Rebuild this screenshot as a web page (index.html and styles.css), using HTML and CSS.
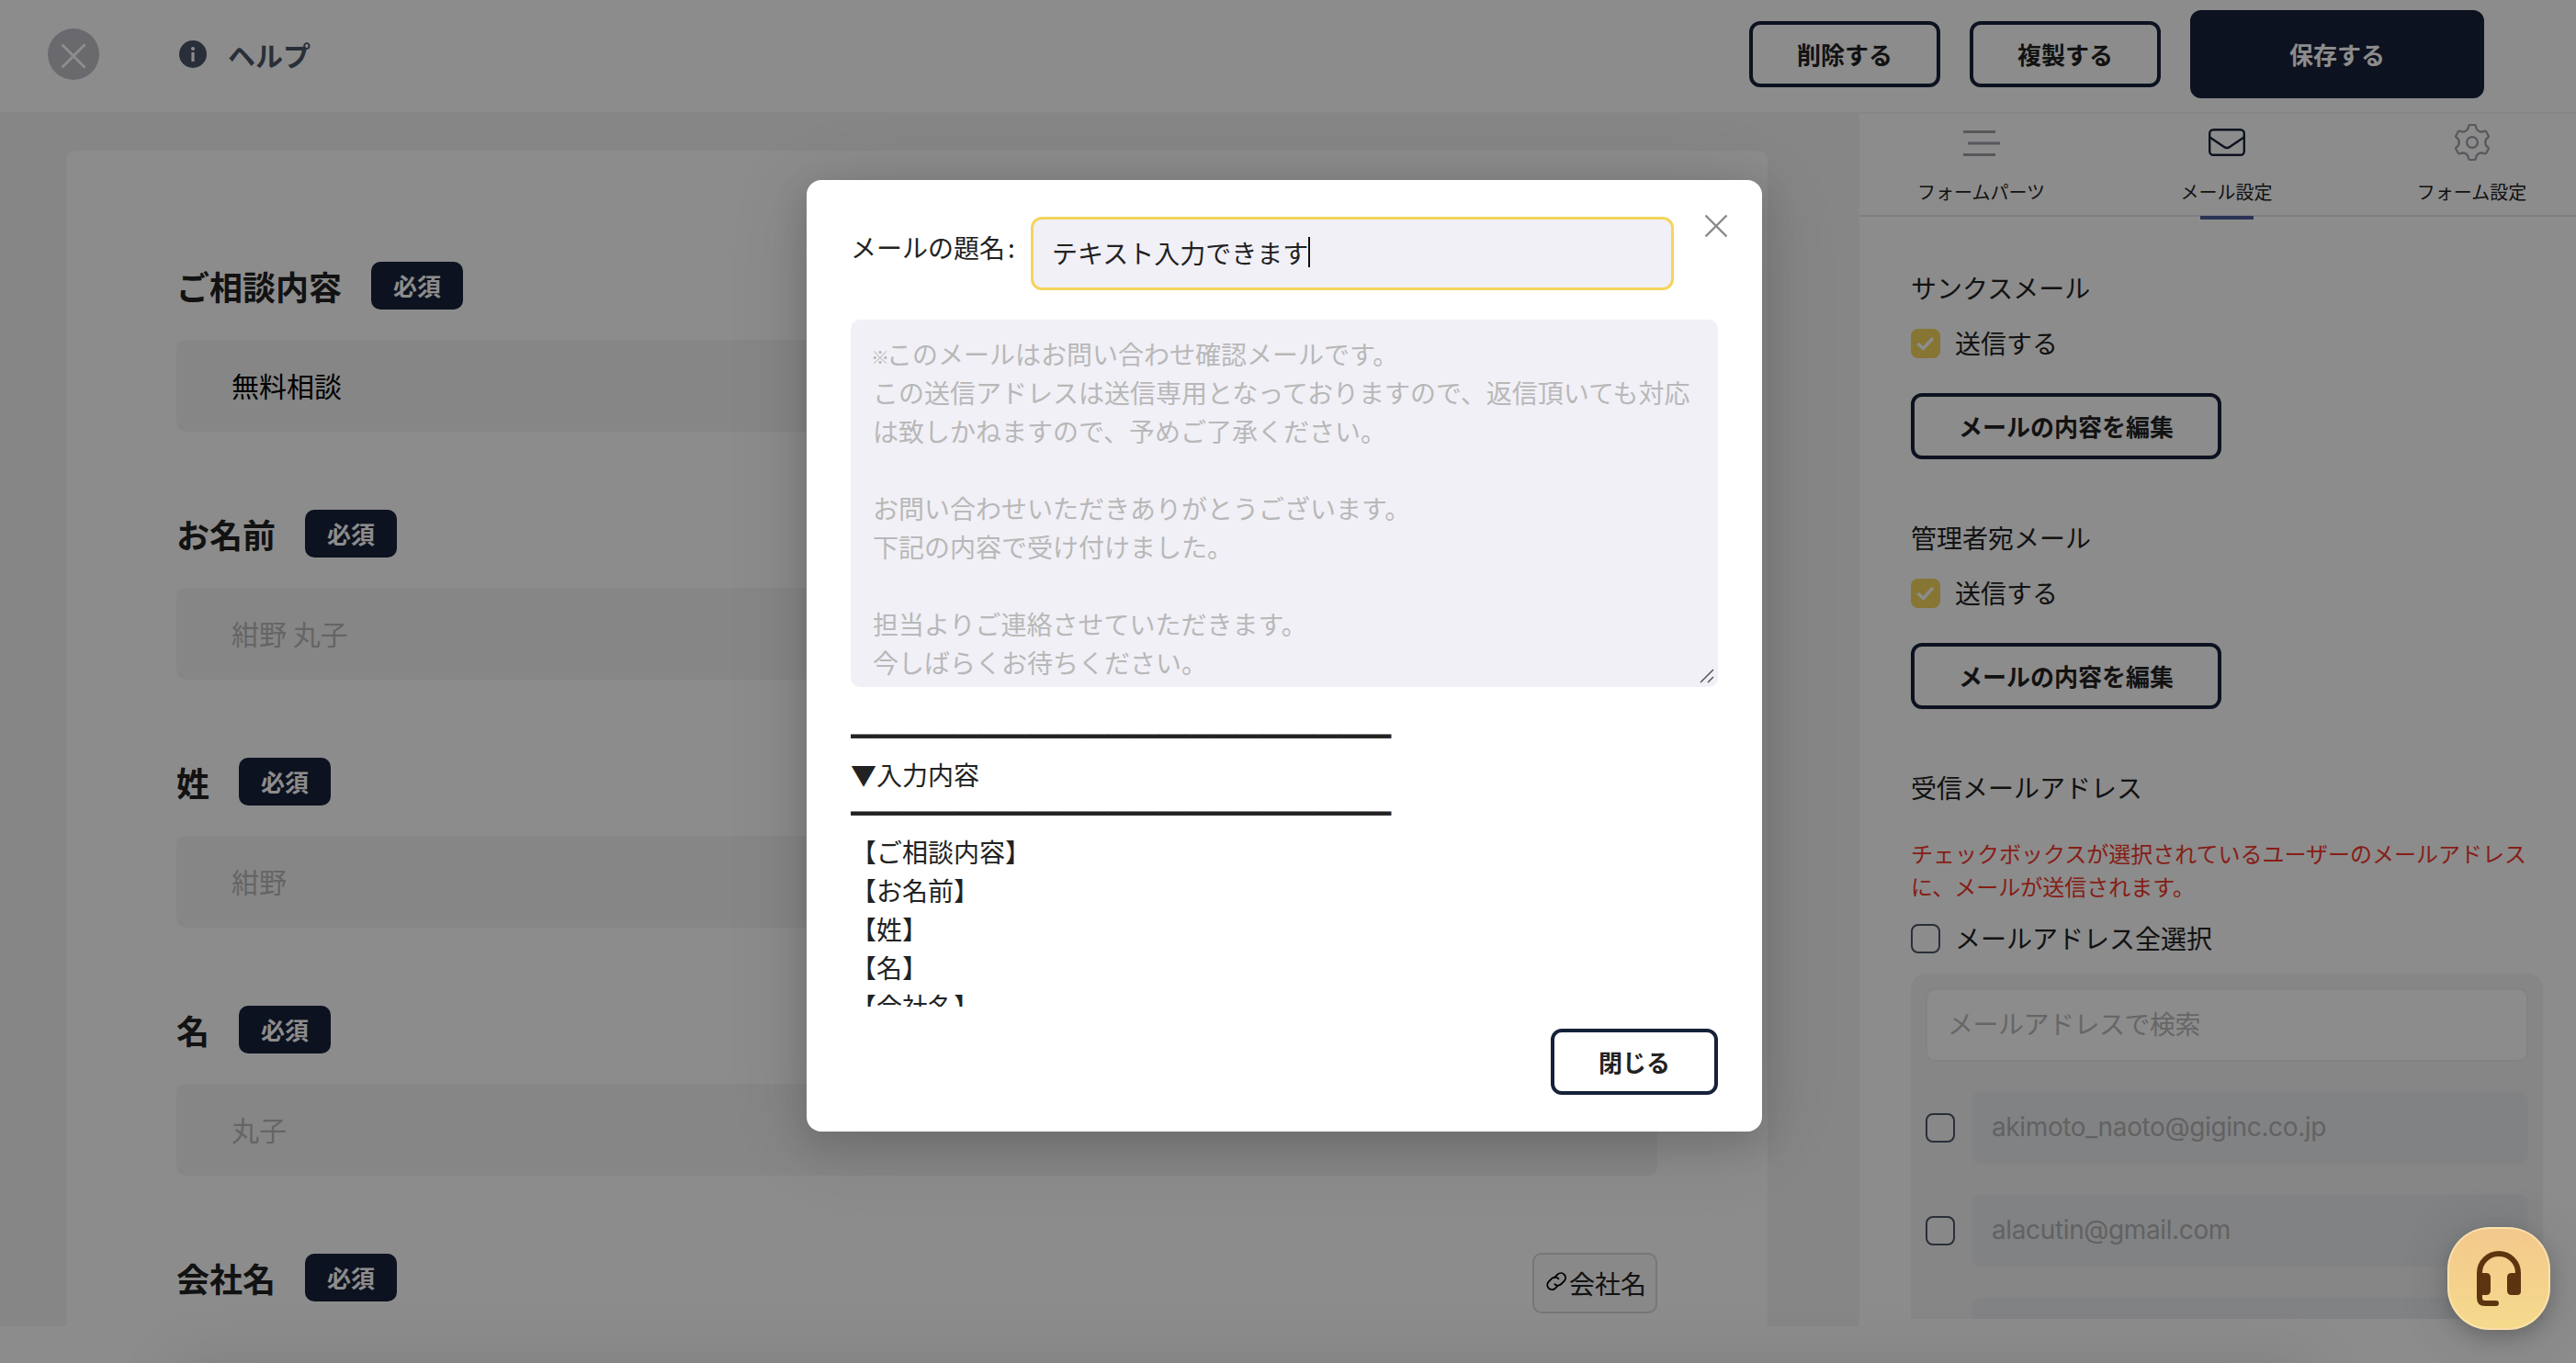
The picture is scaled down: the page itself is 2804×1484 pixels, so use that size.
FILE: index.html
```
<!DOCTYPE html>
<html lang="ja">
<head>
<meta charset="utf-8">
<title>フォーム編集</title>
<link rel="stylesheet" href="styles.css">
</head>
<body>
<div class="app">
  <header class="header">
    <div class="header-left">
      <span class="close-circle"><svg width="26" height="26" viewBox="0 0 26 26"><path d="M1 1L25 25M25 1L1 25" stroke="#fff" stroke-width="3" stroke-linecap="round"/></svg></span>
      <span class="help">
        <svg width="30" height="30" viewBox="0 0 30 30"><circle cx="15" cy="15" r="15" fill="#4b5669"/><rect x="13.4" y="13" width="3.2" height="10" fill="#fff"/><circle cx="15" cy="9" r="2" fill="#fff"/></svg>
        <span class="help-text">ヘルプ</span>
      </span>
    </div>
    <div class="header-actions">
      <button class="btn">削除する</button>
      <button class="btn">複製する</button>
      <button class="btn btn-primary">保存する</button>
    </div>
  </header>
  <div class="body">
    <main class="canvas">
      <div class="card">
        <div class="field"><div class="field-head"><span class="field-label">ご相談内容</span><span class="badge">必須</span></div><div class="field-input filled">無料相談</div></div>
        <div class="field"><div class="field-head"><span class="field-label">お名前</span><span class="badge">必須</span></div><div class="field-input">紺野 丸子</div></div>
        <div class="field"><div class="field-head"><span class="field-label">姓</span><span class="badge">必須</span></div><div class="field-input">紺野</div></div>
        <div class="field"><div class="field-head"><span class="field-label">名</span><span class="badge">必須</span></div><div class="field-input">丸子</div></div>
        <div class="field"><div class="field-head"><span class="field-label">会社名</span><span class="badge">必須</span>
          <span class="chip"><svg width="24" height="24" viewBox="0 0 24 24" fill="none" stroke="#000" stroke-width="1.9" stroke-linecap="round"><path d="M9.9 8.2 L13.6 4.4 A5.1 5.1 0 0 1 20.8 11.6 L17.4 15 A5.1 5.1 0 0 1 10.4 15.2"/><path d="M14.4 9.2 A5.1 5.1 0 0 0 7 9.2 L3.6 12.6 A5.1 5.1 0 0 0 10.8 19.8 L13.6 16.9"/></svg><span>会社名</span></span></div></div>
      </div>
    </main>
    <aside class="side">
      <nav class="tabs">
        <div class="tab"><svg width="44" height="44" viewBox="0 0 44 44" stroke="#9e9ea8" stroke-width="3"><path d="M2 10.5H37M7 23H42M2 35.5H37"/></svg><span>フォームパーツ</span></div>
        <div class="tab active"><svg width="44" height="44" viewBox="0 0 44 44" fill="none" stroke="#16213a" stroke-width="2.4"><rect x="3.2" y="8.2" width="37.6" height="27.6" rx="4"/><path d="M3.500 16.500L19 27Q22 29 25 27L40.500 16.500"/></svg><span>メール設定</span></div>
        <div class="tab"><svg width="44" height="44" viewBox="-22 -22 44 44" fill="none" stroke="#9e9ea8" stroke-width="2.2" stroke-linejoin="round"><path d="M-4.500-15L-4-17.500Q-3.700-19-2.500-19H2.500Q3.700-19 4-17.500L4.500-15Q6.600-11.400 10.740-11.400L13.200-12.200Q14.600-12.600 15.200-11.700L17.700-7.300Q18.300-6.200 17.200-5.300L15.240-3.600Q13.200 0 15.240 3.600L17.200 5.300Q18.300 6.200 17.700 7.300L15.200 11.700Q14.600 12.600 13.200 12.200L10.740 11.400Q6.600 11.400 4.500 15L4 17.500Q3.700 19 2.500 19H-2.500Q-3.700 19-4 17.500L-4.500 15Q-6.600 11.400-10.740 11.400L-13.200 12.200Q-14.600 12.600-15.200 11.700L-17.700 7.300Q-18.300 6.200-17.200 5.300L-15.240 3.600Q-13.200 0-15.240-3.600L-17.200-5.300Q-18.300-6.200-17.700-7.300L-15.200-11.700Q-14.600-12.600-13.200-12.200L-10.740-11.400Q-6.600-11.400-4.500-15Z"/><circle r="5.900"/></svg><span>フォーム設定</span></div>
      </nav>
      <div class="settings">
        <section class="mail-group">
          <div class="title">サンクスメール</div>
          <label class="check-row"><span class="check on"><svg width="22" height="18" viewBox="0 0 22 18"><path d="M2.500 9L8.500 14.500L19 3" fill="none" stroke="#fff" stroke-width="3.600"/></svg></span><span class="check-text">送信する</span></label>
          <button class="btn">メールの内容を編集</button>
        </section>
        <section class="mail-group">
          <div class="title">管理者宛メール</div>
          <label class="check-row"><span class="check on"><svg width="22" height="18" viewBox="0 0 22 18"><path d="M2.500 9L8.500 14.500L19 3" fill="none" stroke="#fff" stroke-width="3.600"/></svg></span><span class="check-text">送信する</span></label>
          <button class="btn">メールの内容を編集</button>
        </section>
        <div class="title">受信メールアドレス</div>
        <p class="notice">チェックボックスが選択されているユーザーのメールアドレスに、メールが送信されます。</p>
        <label class="check-row all"><span class="check"></span><span class="check-text">メールアドレス全選択</span></label>
        <div class="list">
          <div class="search">メールアドレスで検索</div>
          <div class="mail-row"><span class="check"></span><div class="mail">akimoto_naoto@giginc.co.jp</div></div>
          <div class="mail-row"><span class="check"></span><div class="mail">alacutin@gmail.com</div></div>
          <div class="mail-row"><span class="check"></span><div class="mail"></div></div>
        </div>
      </div>
    </aside>
  </div>
  <div class="drawer-shadow"></div>
</div>
<div class="overlay">
  <div class="modal">
    <svg class="modal-close" width="26" height="26" viewBox="0 0 26 26"><path d="M1.500 1.500L24.500 24.500M24.500 1.500L1.500 24.500" stroke="#8a8a8a" stroke-width="2.400"/></svg>
    <div class="subject"><span class="subject-label">メールの題名<span class="colon">:</span></span><div class="subject-input">テキスト入力できます<span class="caret"></span></div></div>
    <div class="textarea"><span class="kome">※</span>このメールはお問い合わせ確認メールです。<br>この送信アドレスは送信専用となっておりますので、返信頂いても対応<br>は致しかねますので、予めご了承ください。<br><br>お問い合わせいただきありがとうございます。<br>下記の内容で受け付けました。<br><br>担当よりご連絡させていただきます。<br>今しばらくお待ちください。
      <svg class="grip" width="16" height="16" viewBox="0 0 16 16"><path d="M1 15L15 1M9 15L15 9" stroke="#555" stroke-width="1.500"/></svg>
    </div>
    <div class="preview"><span class="rule">━━━━━━━━━━━━━━━━━━━━━</span><br>▼入力内容<br><span class="rule">━━━━━━━━━━━━━━━━━━━━━</span><br>【ご相談内容】<br>【お名前】<br>【姓】<br>【名】<br>【会社名】</div>
    <div class="modal-foot"><button class="btn">閉じる</button></div>
  </div>
</div>
<div class="support">
  <svg width="56" height="64" viewBox="0 0 56 64"><path d="M7 30V26A21 21 0 0 1 49 26V30" fill="none" stroke="#5c3510" stroke-width="6"/><path d="M4 26H14Q19 26 19 31V45Q19 50 14 50H4Z" fill="#5c3510"/><path d="M52 26H42Q37 26 37 31V45Q37 50 42 50H48Q52 50 52 46Z" fill="#5c3510"/><path d="M7 48V53Q7 59 13 59H25" fill="none" stroke="#5c3510" stroke-width="6" stroke-linecap="round"/></svg>
</div>
</body>
</html>
```
FILE: styles.css
```
* { box-sizing: border-box; }
body {
  margin: 0;
  font-family: "Noto Sans CJK JP", sans-serif;
  font-size: 28px;
  color: #222;
  background: #fff;
}
.app { position: relative; width: 2804px; height: 1484px; overflow: hidden; background: #fff; }
svg { display: block; flex: none; }

.header { height: 122px; padding: 0 100px 4px 52px; display: flex; align-items: center; justify-content: space-between; }
.header-left { display: flex; align-items: center; gap: 87px; }
.close-circle { width: 56px; height: 56px; border-radius: 50%; background: #c2c2c8; display: flex; align-items: center; justify-content: center; padding-top: 3px; }
.help { display: flex; align-items: center; gap: 23px; font-size: 30px; line-height: 30px; font-weight: 700; color: #4b5669; }
.header-actions { display: flex; align-items: center; gap: 32px; }
.btn {
  height: 72px;
  padding: 0 48px;
  border: 4px solid #16213a;
  border-radius: 12px;
  background: transparent;
  color: #222;
  font: 700 26px/1 "Noto Sans CJK JP", sans-serif;
  white-space: nowrap;
}
.btn-primary { width: 320px; height: 96px; background: #16213a; color: #fff; }

.body { display: flex; height: 1322px; background: #f4f4f4; }
.canvas { width: 2024px; padding: 42px 100px 0 72px; }
.card { height: 1280px; background: #fff; border-radius: 10px 10px 0 0; padding: 121px 120px 0; }
.field { height: 270px; }
.field-head { display: flex; align-items: center; height: 52px; position: relative; }
.field-label { font-size: 36px; line-height: 52px; font-weight: 700; }
.badge { margin-left: 32px; width: 100px; height: 52px; border-radius: 10px; background: #16213a; color: #fff; font-size: 26px; line-height: 52px; font-weight: 700; text-align: center; }
.field-input { margin-top: 33px; height: 100px; border-radius: 10px; background: #f4f4f4; padding-left: 60px; font-size: 30px; line-height: 99px; color: #b8b8b8; }
.field-input.filled { color: #000; }
.chip { margin-left: auto; position: relative; top: 6px; width: 136px; height: 66px; border: 2px solid #d9d9d9; border-radius: 10px; background: #fafafa; display: flex; align-items: center; padding-left: 12px; gap: 2px; line-height: 64px; }
.chip svg { margin-top: -4px; }

.side { width: 780px; height: 1360px; background: #fff; border-top: 2px solid #f4f4f4; position: relative; }
.tabs { display: flex; width: 801px; height: 112px; border-bottom: 2px solid #e8e8f0; }
.tab { width: 267px; flex: none; display: flex; flex-direction: column; align-items: center; padding: 9px 2px 0 0; font-size: 20px; line-height: 28px; position: relative; }
.tab svg { margin-bottom: 18px; }
.tab.active::after { content: ""; position: absolute; left: 104px; top: 111px; width: 58px; height: 4px; background: #4e5f9c; }
.settings { padding: 56px 36px 0 56px; }
.title { line-height: 42px; }
.mail-group { height: 272px; }
.check-row { display: flex; align-items: center; gap: 16px; height: 32px; margin: 24px 0 38px; }
.check-text { line-height: 32px; padding-bottom: 2px; }
.check { width: 32px; height: 32px; border: 2px solid #4b5669; border-radius: 8px; flex: none; display: flex; align-items: center; justify-content: center; }
.check.on { border: 0; background: #f4d55d; }
.mail-group .btn { display: block; }
.notice { margin: 33px 0 0; font-size: 24px; line-height: 36px; color: #f5382a; }
.check-row.all { margin: 23px 0 22px; }
.list { width: 688px; height: 376px; overflow: hidden; border-radius: 16px 16px 0 0; background: #f4f4f4; padding: 16px 16px 0; }
.search { height: 80px; border: 2px solid #eeeef3; border-radius: 10px; background: #fff; padding-left: 22px; line-height: 72px; letter-spacing: -.5px; color: #bbb; }
.mail-row { display: flex; align-items: center; gap: 18px; margin-top: 32px; height: 80px; }
.mail-row .check { background: #f8f8f8; }
.mail { flex: 1; height: 80px; border: 2px solid #eeeef3; border-radius: 10px; background: #ecedf0; padding-left: 20px; font-family: Inter, sans-serif; font-size: 28px; line-height: 74px; letter-spacing: -.37px; color: #b2b2b2; }
.drawer-shadow { position: absolute; left: 192px; top: 1488px; width: 2320px; height: 100px; box-shadow: 0 0 70px rgba(0,0,0,.12); }

.overlay { position: absolute; left: 0; top: 0; width: 2804px; height: 1484px; background: rgba(0,0,0,.45); padding: 196px 0 0 878px; overflow: hidden; }
.modal { position: relative; width: 1040px; height: 1036px; border-radius: 16px; background: #fff; padding: 40px 48px; box-shadow: 0 12px 32px 8px rgba(0,0,0,.1), 0 10px 90px rgba(0,0,0,.12); }
.modal-close { position: absolute; left: 977px; top: 37px; }
.subject { display: flex; height: 80px; }
.subject-label { width: 196px; line-height: 66px; }
.colon { margin-left: 3px; }
.subject-input { width: 700px; height: 80px; border: 3px solid #f4d55d; border-radius: 12px; background: #f1f0f6; padding: 0 0 3px 20px; display: flex; align-items: center; line-height: 70px; }
.caret { width: 2px; height: 33px; background: #111; }
.textarea { position: relative; margin-top: 32px; height: 400px; overflow: hidden; border-radius: 10px; background: #f1f0f6; padding: 16px 24px 0; line-height: 42px; color: #b8b8b8; white-space: nowrap; }
.kome { display: inline-block; width: 16px; margin-left: -1px; font-size: 20px; line-height: 20px; font-weight: 700; text-indent: -1px; }
.grip { position: absolute; right: 4px; bottom: 4px; }
.preview { margin-top: 32px; height: 316px; overflow: hidden; line-height: 42px; }
.rule { -webkit-text-stroke: .8px #222; }
.modal-foot { display: flex; justify-content: flex-end; margin-top: 24px; }
.support { position: absolute; left: 2664px; top: 1336px; width: 112px; height: 112px; border-radius: 46px; border: 2px solid rgba(255,235,190,.6); background: linear-gradient(#f3c88c, #f5da8c); box-shadow: 0 8px 20px rgba(0,0,0,.18), 0 4px 60px rgba(0,0,0,.12); display: flex; align-items: center; justify-content: center; }
```
